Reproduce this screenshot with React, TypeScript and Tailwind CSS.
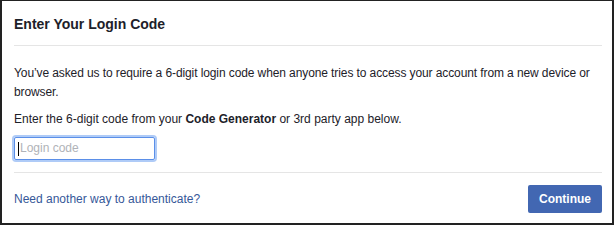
import React from "react";

export default function App() {
  return (
    <div
      className="w-[614px] h-[225px] bg-white border-l-2 border-r-2 border-t border-b-2 border-[#222] flex flex-col text-[#1d2129]"
      style={{ fontFamily: '"Liberation Sans", Arial, sans-serif' }}
    >
      <div className="ml-[12px] mr-[10px] pt-[14px] pb-[12px] border-b border-[#e5e5e5]">
        <h1 className="text-[14px] leading-[18px] font-bold">Enter Your Login Code</h1>
      </div>
      <div className="pl-[12px] pr-[10px] pt-[18px] pb-[12px] text-[12px] leading-[19px]">
        <p className="whitespace-nowrap tracking-[-0.1px]">
          You’ve asked us to require a 6-digit login code when anyone tries to access your account from a new device or
          <br />
          browser.
        </p>
        <p className="mt-[8px]">
          Enter the 6-digit code from your <span className="font-bold">Code Generator</span> or 3rd party app below.
        </p>
        <div className="mt-[8px] w-[141px] h-[23px] border border-[#5b8fe8] rounded-[2px] shadow-[0_0_0_2px_rgba(110,160,240,0.55)] flex items-center pl-[3px]">
          <span className="w-px h-[14px] bg-black" />
          <span className="text-[12px] text-[#b0b3b8] ml-px">Login code</span>
        </div>
      </div>
      <div className="ml-[12px] mr-[10px] border-t border-[#e5e5e5] flex items-center justify-between pt-[12px]">
        <a className="text-[12px] text-[#365899]">Need another way to authenticate?</a>
        <button className="w-[74px] h-[28px] bg-[#4267b2] rounded-[2px] text-white text-[12px] font-bold">
          Continue
        </button>
      </div>
    </div>
  );
}
